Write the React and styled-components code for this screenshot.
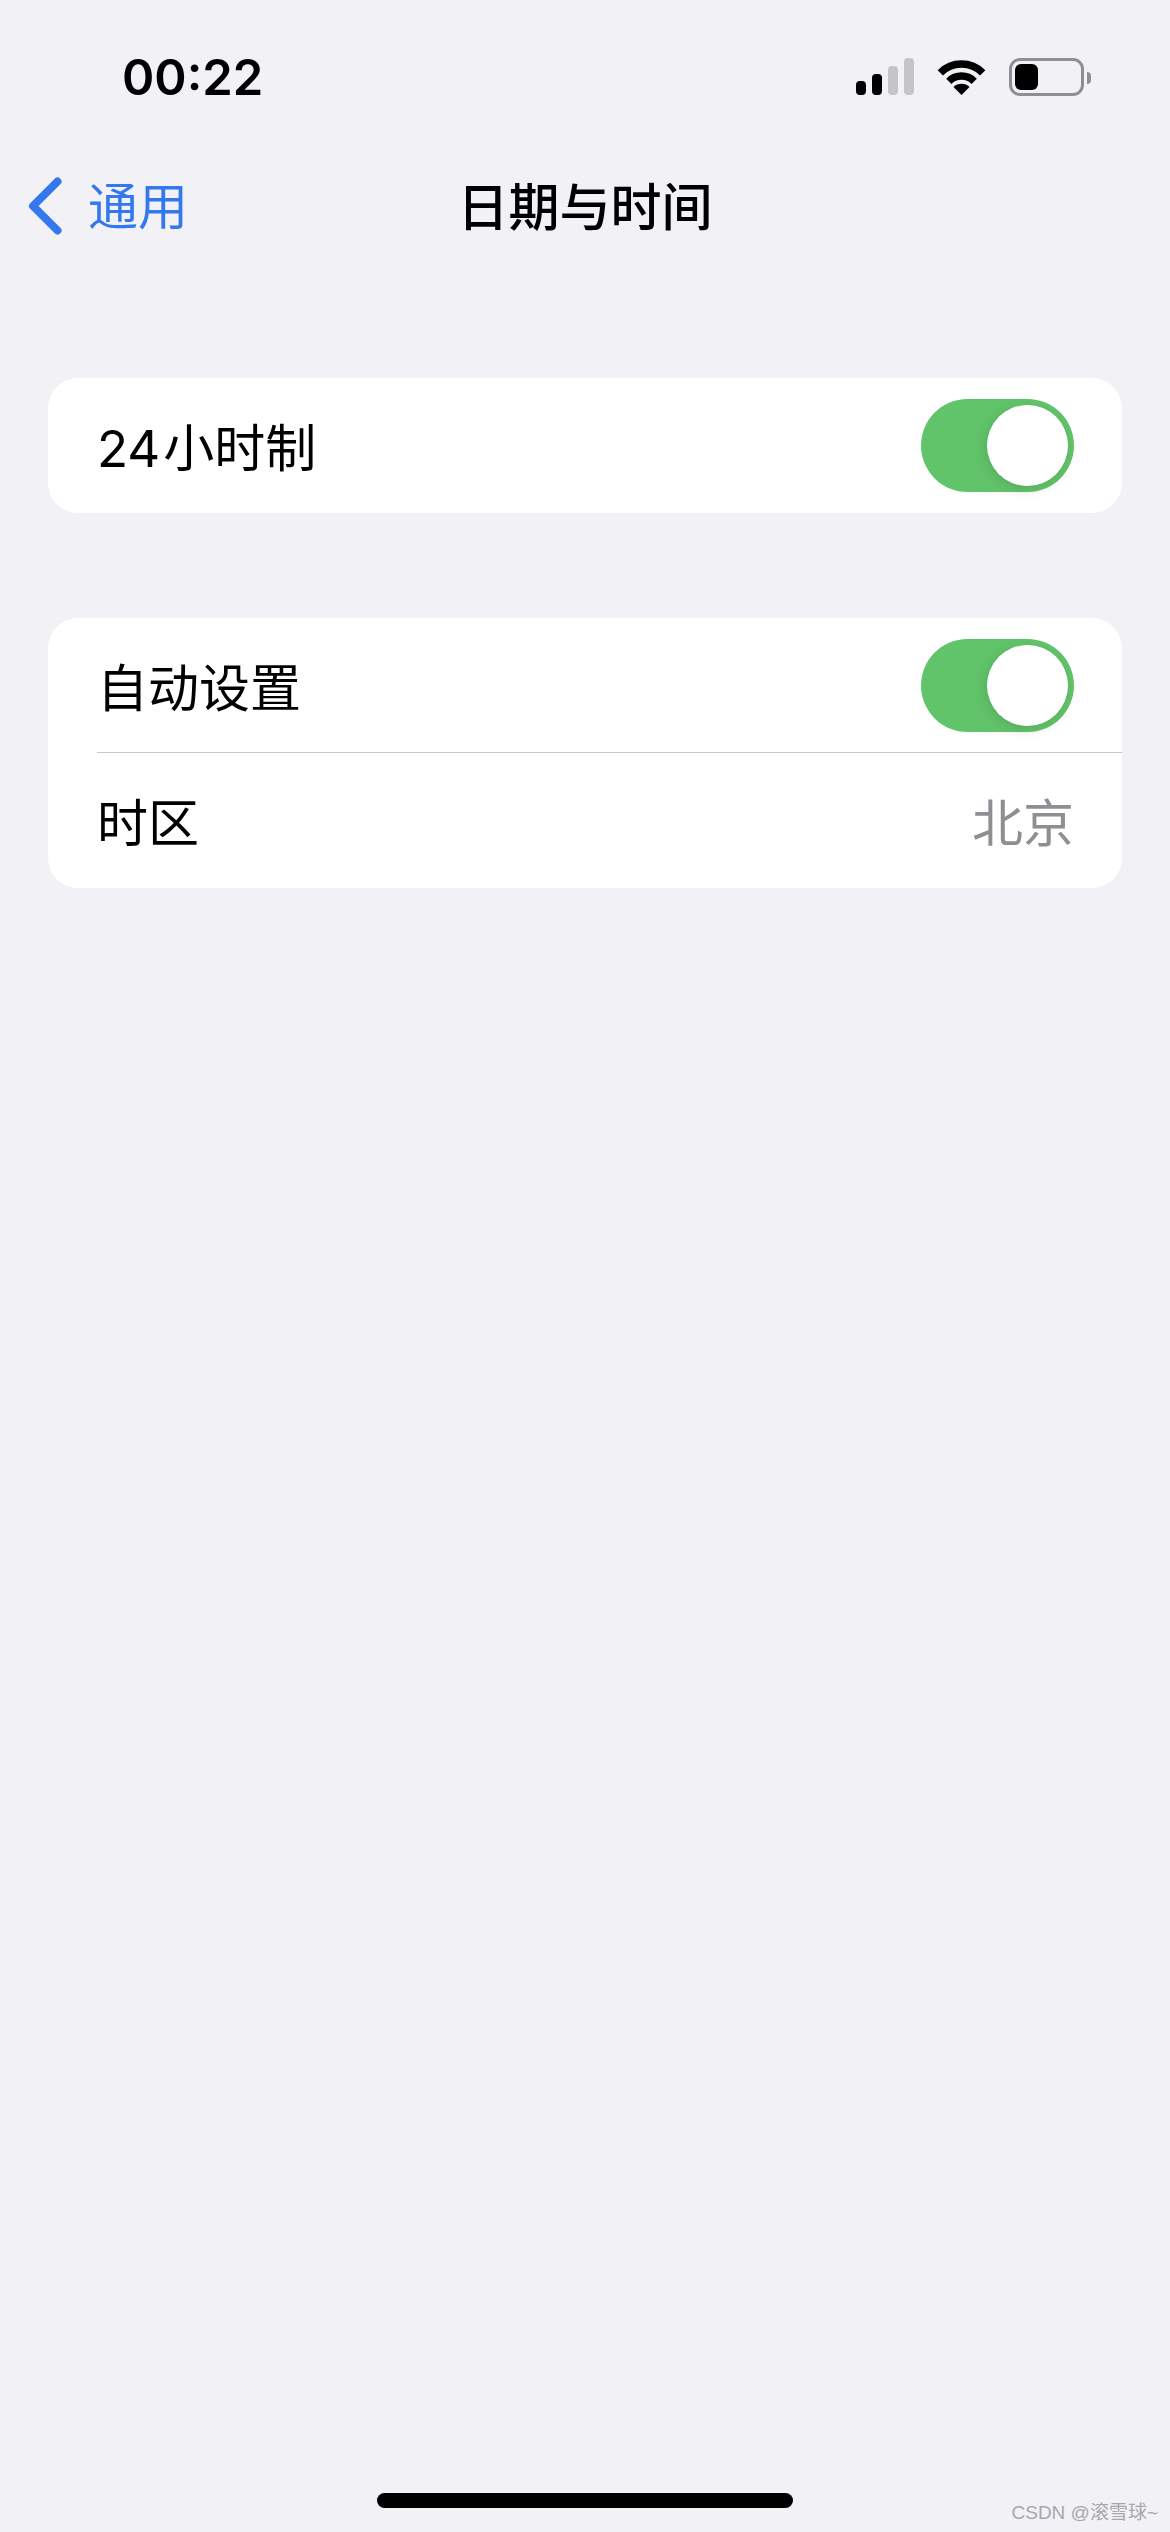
import React from "react";
import styled, { createGlobalStyle } from "styled-components";

const Global = createGlobalStyle`
  html, body { margin: 0; padding: 0; background: #f1f1f6; }
  * { box-sizing: border-box; }
`;

const FONT = `Inter, "Noto Sans CJK SC", sans-serif`;

const Page = styled.div`
  position: relative;
  width: 1170px;
  height: 2532px;
  background: #f1f1f6;
  font-family: ${FONT};
  color: #000;
  display: flex;
  flex-direction: column;
  overflow: hidden;
`;

const StatusBar = styled.div`
  height: 158px;
  padding: 48px 86px 0 122px;
  display: flex;
  justify-content: space-between;
  align-items: flex-start;
`;

const Time = styled.div`
  font-size: 49px;
  font-weight: 600;
  line-height: 59px;
`;

const StatusIcons = styled.div`
  display: flex;
  align-items: flex-start;
  gap: 22px;
  padding-top: 10px;
`;

const Signal = styled.div`
  display: flex;
  align-items: flex-end;
  gap: 6px;
  height: 37px;
`;

const Bar = styled.div`
  width: 10px;
  height: ${(p) => p.$h}px;
  border-radius: 4px;
  background: ${(p) => (p.$on ? "#000" : "#c5c5c9")};
`;

const Battery = styled.div`
  position: relative;
  width: 75px;
  height: 38px;
  border: 3px solid #8e8e93;
  border-radius: 11px;
  padding: 3px;
  display: flex;
  &::after {
    content: "";
    position: absolute;
    left: 75px;
    top: 11px;
    width: 4px;
    height: 12px;
    background: #8e8e93;
    border-radius: 0 4px 4px 0;
  }
`;

const BatteryFill = styled.div`
  width: 23px;
  border-radius: 6px;
  background: #000;
`;

const NavBar = styled.div`
  height: 96px;
  padding: 0 28px;
  position: relative;
  display: flex;
  align-items: center;
`;

const Back = styled.div`
  display: flex;
  align-items: center;
  gap: 26px;
  color: #3478f0;
  font-size: 50px;
`;

const BackLabel = styled.span`
  margin-bottom: 6px;
`;

const NavTitle = styled.div`
  position: absolute;
  left: 0;
  right: 0;
  top: 23px;
  line-height: 54px;
  text-align: center;
  font-size: 51px;
  font-weight: 500;
`;

const Content = styled.div`
  flex: 1;
  padding: 124px 48px 0;
  display: flex;
  flex-direction: column;
  gap: 105px;
`;

const Card = styled.div`
  background: #fff;
  border-radius: 30px;
  overflow: hidden;
`;

const Row = styled.div`
  height: 135px;
  margin-left: 49px;
  padding-right: 48px;
  display: flex;
  align-items: center;
  justify-content: space-between;
  font-size: 51px;
  border-bottom: ${(p) => (p.$divider ? "1px solid #c8c8cb" : "none")};
`;

const RowLabel = styled.span`
  margin-bottom: 1px;
`;

const Digits = styled.span`
  margin-right: 3px;
`;

const Value = styled.div`
  color: #8e8e93;
  margin-bottom: 1px;
`;

const Toggle = styled.div`
  width: 153px;
  height: 93px;
  border-radius: 47px;
  background: #62c46a;
  padding: 6px;
  display: flex;
  justify-content: flex-end;
`;

const Knob = styled.div`
  width: 81px;
  height: 81px;
  border-radius: 50%;
  background: #fff;
  box-shadow: -2px 3px 12px rgba(40, 90, 50, 0.22);
`;

const HomeArea = styled.div`
  height: 39px;
  display: flex;
  justify-content: center;
`;

const HomeBar = styled.div`
  width: 416px;
  height: 15px;
  border-radius: 8px;
  background: #000;
`;

const Watermark = styled.div`
  position: absolute;
  right: 12px;
  bottom: 8px;
  font-size: 19px;
  line-height: 22px;
  color: #a8a8ac;
  font-family: "Liberation Sans", "Noto Sans CJK SC", sans-serif;
`;

const Chevron = () => (
  <svg width="34" height="58" viewBox="0 0 34 58" fill="none">
    <path d="M29.5 4.5 L5 29 L29.5 53.5" stroke="#3478f0" strokeWidth="8" strokeLinecap="round" strokeLinejoin="round" />
  </svg>
);

const Wifi = () => (
  <svg width="51" height="37" viewBox="0 0 51 37" fill="none">
    <path d="M4.3 14.8 A30 30 0 0 1 46.7 14.8" stroke="#000" strokeWidth="7.5" />
    <path d="M12.8 23.3 A18 18 0 0 1 38.2 23.3" stroke="#000" strokeWidth="7.5" />
    <path d="M25.5 37 L17.5 29 A11.3 11.3 0 0 1 33.5 29 Z" fill="#000" />
  </svg>
);

const Switch = () => (
  <Toggle>
    <Knob />
  </Toggle>
);

export default function App() {
  return (
    <Page>
      <Global />
      <StatusBar>
        <Time>00:22</Time>
        <StatusIcons>
          <Signal>
            <Bar $on $h={14} />
            <Bar $on $h={21} />
            <Bar $h={29} />
            <Bar $h={37} />
          </Signal>
          <Wifi />
          <Battery>
            <BatteryFill />
          </Battery>
        </StatusIcons>
      </StatusBar>
      <NavBar>
        <Back>
          <Chevron />
          <BackLabel>通用</BackLabel>
        </Back>
        <NavTitle>日期与时间</NavTitle>
      </NavBar>
      <Content>
        <Card>
          <Row>
            <RowLabel><Digits>24</Digits>小时制</RowLabel>
            <Switch />
          </Row>
        </Card>
        <Card>
          <Row $divider>
            <RowLabel>自动设置</RowLabel>
            <Switch />
          </Row>
          <Row>
            <RowLabel>时区</RowLabel>
            <Value>北京</Value>
          </Row>
        </Card>
      </Content>
      <HomeArea>
        <HomeBar />
      </HomeArea>
      <Watermark>CSDN @滚雪球~</Watermark>
    </Page>
  );
}
